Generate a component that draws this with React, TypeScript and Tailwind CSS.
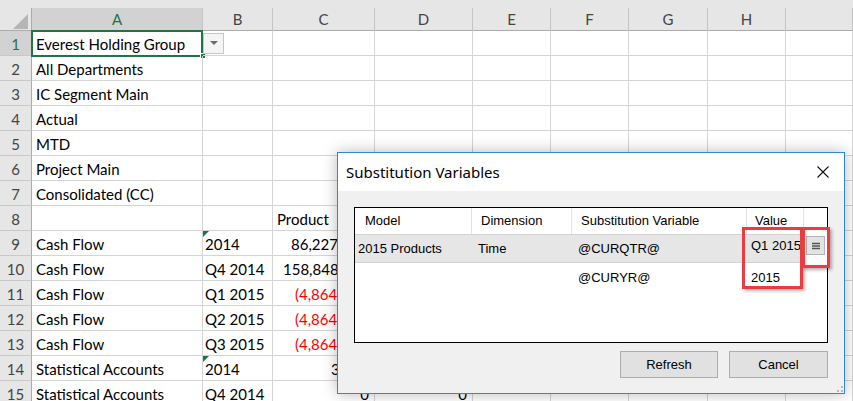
import React from "react";

type Row = {
  a?: string;
  b?: string;
  c?: React.ReactNode;
  d?: React.ReactNode;
  tri?: boolean;
};

const rows: Row[] = [
  { a: "Everest Holding Group" },
  { a: "All Departments" },
  { a: "IC Segment Main" },
  { a: "Actual" },
  { a: "MTD" },
  { a: "Project Main" },
  { a: "Consolidated (CC)" },
  { c: <span className="pl-[4px]">Product</span> },
  { a: "Cash Flow", b: "2014", tri: true, c: <span className="pl-[18px]">86,227,475</span> },
  { a: "Cash Flow", b: "Q4 2014", c: <span className="pl-[10px]">158,848,101</span> },
  { a: "Cash Flow", b: "Q1 2015", c: <span className="pl-[22px] text-[#ff0000]">(4,864,113)</span> },
  { a: "Cash Flow", b: "Q2 2015", c: <span className="pl-[22px] text-[#ff0000]">(4,864,113)</span> },
  { a: "Cash Flow", b: "Q3 2015", c: <span className="pl-[22px] text-[#ff0000]">(4,864,113)</span> },
  { a: "Statistical Accounts", b: "2014", tri: true, c: <span className="pl-[58px]">3</span> },
  {
    a: "Statistical Accounts",
    b: "Q4 2014",
    c: <span className="ml-auto pr-[5px]">0</span>,
    d: <span className="ml-auto pr-[5px]">0</span>,
  },
];

const headers = ["A", "B", "C", "D", "E", "F", "G", "H", ""];

const cell = "border-r border-b border-[#d4d4d4] flex items-center whitespace-nowrap h-[25px] pt-[3px]";

export default function App() {
  return (
    <div className="relative w-[853px] h-[401px] overflow-hidden bg-white text-[15px] text-black font-['Lato',sans-serif]">
      {/* column header */}
      <div className="grid grid-cols-[32px_171px_70px_102px_98px_78px_78px_79px_78px_1fr] bg-[#e6e6e6] h-[31px] border-b border-[#ababab]">
        <div className="relative border-r border-[#ababab] mt-[8px]">
          <svg className="absolute left-[13px] top-[6px]" width="15" height="15" viewBox="0 0 15 15">
            <polygon points="15,0 15,15 0,15" fill="#b5b5b5" />
          </svg>
        </div>
        {headers.map((h, i) => (
          <div
            key={i}
            className={`mt-[8px] flex items-center justify-center border-r border-[#c4c4c4] ${
              i === 0 ? "bg-[#d2d2d2] text-[#217346]" : "text-[#444]"
            }`}
          >
            {h}
          </div>
        ))}
      </div>

      {/* rows */}
      {rows.map((r, i) => (
        <div key={i} className="grid grid-cols-[32px_171px_70px_102px_98px_78px_78px_79px_78px_1fr]">
          <div
            className={`h-[25px] flex items-center justify-center border-r border-b pt-[3px] ${
              i === 0 ? "bg-[#d2d2d2] text-[#217346] border-r-[#ababab] border-b-[#c8c8c8]" : "bg-[#e6e6e6] text-[#444] border-r-[#ababab] border-b-[#c8c8c8]"
            }`}
          >
            {i + 1}
          </div>
          <div className={`${cell} relative pl-[4px]`}>
            {r.a}
            {i === 0 && (
              <>
                <div className="absolute -left-px -top-px w-[172px] h-[27px] border-2 border-[#217346]" />
                <div className="absolute -right-[4px] -bottom-[4px] w-[6px] h-[6px] bg-[#217346] border border-white" />
              </>
            )}
          </div>
          <div className={`${cell} relative pl-[2px]`}>
            {r.tri && (
              <svg className="absolute left-0 top-0" width="6" height="6" viewBox="0 0 6 6">
                <polygon points="0,0 6,0 0,6" fill="#1e7145" />
              </svg>
            )}
            {i === 0 ? (
              <div className="self-start -mt-[1px] -ml-[2px] w-[21px] h-[21px] border border-[#c6c6c6] bg-[#f4f4f4] flex items-center justify-center">
                <svg width="8" height="5" viewBox="0 0 8 5">
                  <polygon points="0,0 8,0 4,4" fill="#6b6b6b" />
                </svg>
              </div>
            ) : (
              r.b
            )}
          </div>
          <div className={cell}>{r.c}</div>
          <div className={cell}>{r.d}</div>
          <div className={cell} />
          <div className={cell} />
          <div className={cell} />
          <div className={cell} />
          <div className={cell} />
        </div>
      ))}

      {/* dialog */}
      <div className="absolute left-[337px] top-[152px] w-[508px] h-[242px] border border-[#3385d6] bg-[#f0f0f0] shadow-[0_0_14px_rgba(0,0,0,0.28)] flex flex-col font-['Liberation_Sans',sans-serif] text-[13px]">
        <div className="h-[38px] bg-white flex items-center justify-between pl-[8px] pr-[15px]">
          <span className="text-[15px] font-['Noto_Sans',sans-serif] text-black">Substitution Variables</span>
          <svg width="12" height="12" viewBox="0 0 12 12">
            <path d="M0.5 0.5 L11.5 11.5 M11.5 0.5 L0.5 11.5" stroke="#111" strokeWidth="1.1" />
          </svg>
        </div>
        <div className="flex-1 flex flex-col pl-[16px] pr-[16px] pt-[16px]">
          <div className="h-[136px] border border-black bg-white flex flex-col">
            {/* header */}
            <div className="grid grid-cols-[117px_100px_175px_57px_1fr] h-[26px]">
              <div className="flex items-center pl-[10px] pb-[1px] border-r border-[#e3e3e3]">Model</div>
              <div className="flex items-center pl-[9px] pb-[1px] border-r border-[#e3e3e3]">Dimension</div>
              <div className="flex items-center pl-[9px] pb-[1px] border-r border-[#e3e3e3]">Substitution Variable</div>
              <div className="flex items-center pl-[8px] pb-[1px] border-r border-[#e3e3e3]">Value</div>
              <div />
            </div>
            {/* row 1 */}
            <div className="grid grid-cols-[117px_100px_175px_57px_1fr] h-[29px]">
              <div className="flex items-center pl-[3px] bg-[#e6e6e6] border-y border-[#d2d2d2]">2015 Products</div>
              <div className="flex items-center pl-[6px] bg-[#e6e6e6] border-y border-[#d2d2d2]">Time</div>
              <div className="flex items-center pl-[6px] bg-[#e6e6e6] border-y border-[#d2d2d2]">@CURQTR@</div>
              <div className="flex items-center pl-[4px] pb-[5px] bg-[#e6e6e6] border-y border-[#d2d2d2]">Q1 2015</div>
              <div className="flex items-start pl-[2px] pt-[2px]">
                <div className="w-[19px] h-[19px] border border-[#b4b4b4] bg-[#e3e3e3] flex items-center justify-center">
                  <svg width="8" height="8" viewBox="0 0 8 8">
                    <path d="M0 1.5 H8 M0 4 H8 M0 6.5 H8" stroke="#555" strokeWidth="1.4" />
                  </svg>
                </div>
              </div>
            </div>
            {/* row 2 */}
            <div className="grid grid-cols-[117px_100px_175px_57px_1fr] h-[29px]">
              <div />
              <div />
              <div className="flex items-center pl-[6px]">@CURYR@</div>
              <div className="flex items-center pl-[4px]">2015</div>
              <div />
            </div>
          </div>
          <div className="flex justify-end gap-[11px] mt-[8px]">
            <div className="w-[98px] h-[27px] border border-[#adadad] bg-[#e1e1e1] flex items-center justify-center">Refresh</div>
            <div className="w-[99px] h-[27px] border border-[#adadad] bg-[#e1e1e1] flex items-center justify-center">Cancel</div>
          </div>
        </div>
        <svg className="absolute right-[1px] bottom-[1px]" width="6" height="6" viewBox="0 0 6 6">
          <rect x="4" y="0" width="2" height="2" fill="#b8b8b8" />
          <rect x="4" y="4" width="2" height="2" fill="#b8b8b8" />
          <rect x="0" y="4" width="2" height="2" fill="#b8b8b8" />
        </svg>
      </div>

      {/* red highlight boxes */}
      <div className="absolute left-[742px] top-[227px] w-[61px] h-[62px] border-[3px] border-[#ea3c41] shadow-[2px_2px_3px_rgba(0,0,0,0.3)]" />
      <div className="absolute left-[802px] top-[227px] w-[28px] h-[41px] border-[3px] border-[#ea3c41] shadow-[2px_2px_3px_rgba(0,0,0,0.3)]" />
    </div>
  );
}
